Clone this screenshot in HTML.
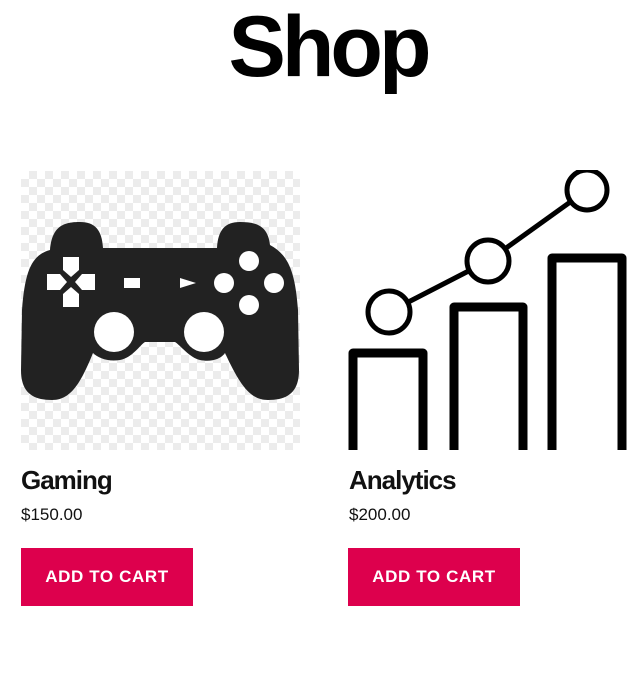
<!DOCTYPE html>
<html><head><style>
body{margin:0;width:634px;height:682px;background:#fff;font-family:"Liberation Sans",sans-serif;position:relative;overflow:hidden;color:#111}
h1{position:absolute;left:0;width:656px;text-align:center;top:-2px;margin:0;font-size:86px;font-weight:bold;letter-spacing:-4px;color:#000}
.img{position:absolute;top:171px;width:279px;height:279px}
.chk{background-color:#fff;background-image:linear-gradient(45deg,#ececec 25%,transparent 25%,transparent 75%,#ececec 75%),linear-gradient(45deg,#ececec 25%,transparent 25%,transparent 75%,#ececec 75%);background-size:16px 16px;background-position:0 0,8px 8px}
.t{position:absolute;top:465px;font-size:26px;font-weight:bold;letter-spacing:-1px;margin:0}
.p{position:absolute;top:505px;font-size:17px}
.b{position:absolute;top:548px;width:172px;height:58px;background:#dd004d;color:#fff;font-size:17px;font-weight:bold;letter-spacing:0.6px;text-align:center;line-height:58px}
</style></head><body>
<h1>Shop</h1>
<div class="img chk" style="left:21px">
<svg width="279" height="279" viewBox="1 1 279 279">
<path fill="#222" d="M30,80 C32,55 45,52 60,52 C75,52 82,60 83,78 L197,78 C198,60 205,52 220,52 C235,52 248,55 250,75 C268,85 275,100 278,140 L279,200 C279,222 268,230 248,230 C230,230 220,215 205,183 C200,190 190,192 180,190 C170,188 160,175 155,172 L125,172 C120,175 112,188 100,190 C88,192 78,188 73,183 C60,215 50,230 32,230 C12,230 1,222 1,200 L2,140 C5,100 12,85 30,80 Z"/>
<g fill="#fff">
<circle cx="94" cy="162" r="20"/><circle cx="184" cy="162" r="20"/>
<circle cx="229" cy="91" r="10"/><circle cx="204" cy="113" r="10"/><circle cx="254" cy="113" r="10"/><circle cx="229" cy="135" r="10"/>
<path d="M43,87H59V100L51,107L43,100Z M43,137H59V124L51,117L43,124Z M27,104H40L47,112L40,120H27Z M75,104H62L55,112L62,120H75Z"/>
<rect x="104" y="108" width="16" height="10"/>
<path d="M160,108L176,113L160,118Z"/>
</g>
</svg></div>
<div class="img" style="left:340px;width:294px;top:170px;height:280px;overflow:hidden">
<svg width="294" height="280" viewBox="340 170 294 280">
<g fill="none" stroke="#000">
<line x1="389" y1="312" x2="488" y2="261" stroke-width="5"/>
<line x1="488" y1="261" x2="587" y2="190" stroke-width="5"/>
<circle cx="389" cy="312" r="21" fill="#fff" stroke-width="5"/>
<circle cx="488" cy="261" r="21" fill="#fff" stroke-width="5"/>
<circle cx="587" cy="190" r="20" fill="#fff" stroke-width="5"/>
<g stroke-width="9" stroke-linejoin="round">
<path d="M353,460V353H423V460"/>
<path d="M454,460V307H523V460"/>
<path d="M552,460V258H622V460"/>
</g></g></svg></div>
<div class="t" style="left:21px">Gaming</div>
<div class="t" style="left:349px">Analytics</div>
<div class="p" style="left:21px">$150.00</div>
<div class="p" style="left:349px">$200.00</div>
<div class="b" style="left:21px">ADD TO CART</div>
<div class="b" style="left:348px">ADD TO CART</div>
</body></html>
